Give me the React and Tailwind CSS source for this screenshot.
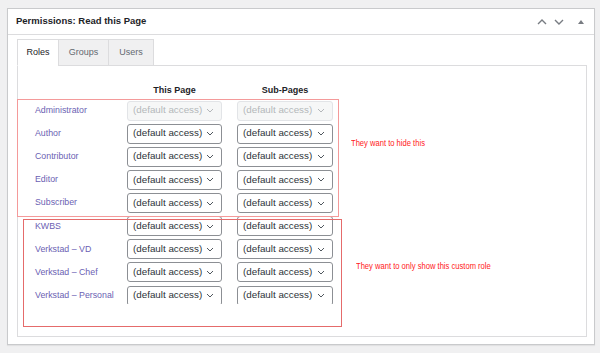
import React from 'react';

const roles = [
  { name: 'Administrator', disabled: true },
  { name: 'Author' },
  { name: 'Contributor' },
  { name: 'Editor' },
  { name: 'Subscriber' },
  { name: 'KWBS' },
  { name: 'Verkstad – VD' },
  { name: 'Verkstad – Chef' },
  { name: 'Verkstad – Personal', clip: true },
];

function Chevron({ color }) {
  return (
    <svg width="8" height="5" viewBox="0 0 8 5" className="shrink-0">
      <path d="M1 1 L4 4 L7 1" fill="none" stroke={color} strokeWidth="1" />
    </svg>
  );
}

function AccessSelect({ disabled, clip, width }) {
  return (
    <div className={`${width} ${clip ? 'h-[18px] overflow-hidden' : 'h-[20px]'}`}>
      <div
        className={`h-[20px] w-full rounded-[3px] border flex items-center justify-between pl-[5px] pr-[7px] text-[9.8px] ${
          disabled
            ? 'border-[#e2e4e7] bg-[#f6f7f7] text-[#b4b7ba]'
            : 'border-[#8c8f94] bg-white text-[#2c3338]'
        }`}
      >
        <span>(default access)</span>
        <Chevron color={disabled ? '#b4b7ba' : '#50575e'} />
      </div>
    </div>
  );
}

export default function App() {
  return (
    <div className="w-[600px] h-[353px] bg-[#f0f0f1] pt-[8px] pl-[7px] font-['Liberation_Sans',Arial,sans-serif]">
      <div className="w-[588px] h-[337px] bg-white border border-[#c9cacc] shadow-[0_1px_1px_rgba(0,0,0,0.06)] flex flex-col">
        {/* Header */}
        <div className="h-[26px] shrink-0 border-b border-[#dcdcde] flex items-center justify-between pl-[8px] pr-[8px]">
          <h2 className="text-[9.5px] font-bold text-[#1d2327]">Permissions: Read this Page</h2>
          <div className="flex items-center">
            <svg width="10" height="6" viewBox="0 0 10 6" className="mr-[7px]">
              <path d="M1 5 L5 1 L9 5" fill="none" stroke="#787c82" strokeWidth="1.4" />
            </svg>
            <svg width="10" height="6" viewBox="0 0 10 6" className="mr-[14px]">
              <path d="M1 1 L5 5 L9 1" fill="none" stroke="#787c82" strokeWidth="1.4" />
            </svg>
            <svg width="6" height="4" viewBox="0 0 6 4" className="mr-[2px]">
              <path d="M0 4 L3 0 L6 4 Z" fill="#787c82" />
            </svg>
          </div>
        </div>

        {/* Body */}
        <div className="pl-[9px] pr-[7px] pt-[4px]">
          <div className="flex h-[27px] relative z-10">
            <div className="w-[42px] h-[27px] border border-[#dcdcde] border-b-white bg-white flex items-center justify-center text-[9px] text-[#1d2327]">
              Roles
            </div>
            <div className="w-[51px] h-[27px] ml-[-1px] border border-[#dcdcde] bg-[#f0f0f1] flex items-center justify-center text-[9px] text-[#646970]">
              Groups
            </div>
            <div className="w-[46px] h-[27px] ml-[-1px] border border-[#dcdcde] bg-[#f0f0f1] flex items-center justify-center text-[9px] text-[#646970]">
              Users
            </div>
          </div>

          <div className="relative mt-[-1px] h-[272px] border border-[#dcdcde] bg-white pt-[16px] pl-[17px]">
            <div className="flex h-[17px] items-center text-[9px] font-bold text-[#1d2327]">
              <div className="w-[92px]" />
              <div className="w-[95px] text-center">This Page</div>
              <div className="w-[96px] ml-[15px] text-center">Sub-Pages</div>
            </div>

            <div className="flex flex-col">
              {roles.map((r) => (
                <div key={r.name} className="flex items-start gap-[15px] h-[23.125px] pt-[1.5px]">
                  <div className="w-[77px] h-[20px] flex items-center text-[8.8px] text-[#6b5fb3] whitespace-nowrap">
                    {r.name}
                  </div>
                  <AccessSelect disabled={r.disabled} clip={r.clip} width="w-[95px]" />
                  <AccessSelect disabled={r.disabled} clip={r.clip} width="w-[96px]" />
                </div>
              ))}
            </div>

            {/* Annotation overlays */}
            <div className="absolute left-[-1px] top-[33px] w-[322px] h-[118px] border border-[#f49a9a]" />
            <div className="absolute left-[5px] top-[153px] w-[319px] h-[108px] border border-[#e56b6b]" />
            <div className="absolute left-[333px] top-[71px] leading-[12px] text-[9.5px] text-[#ff1a1a] origin-left scale-x-[0.8] whitespace-nowrap">
              They want to hide this
            </div>
            <div className="absolute left-[338px] top-[194px] leading-[12px] text-[9.5px] text-[#ff1a1a] origin-left scale-x-[0.8] whitespace-nowrap">
              They want to only show this custom role
            </div>
          </div>
        </div>
      </div>
    </div>
  );
}
